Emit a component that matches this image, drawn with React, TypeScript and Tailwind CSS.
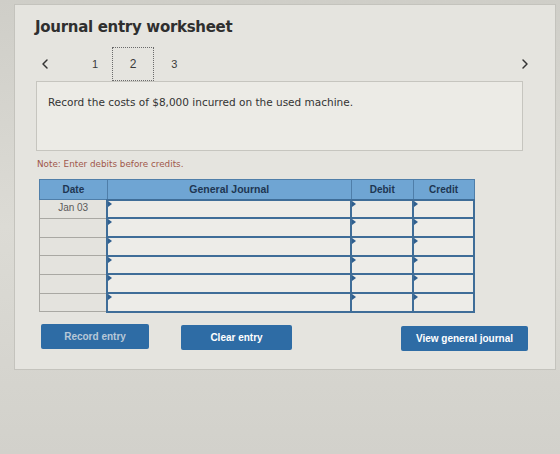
import { ChevronLeft, ChevronRight } from 'lucide-react'

const verdana = "font-['DejaVu_Sans',Verdana,sans-serif]"
const arial = "font-['Liberation_Sans',Arial,sans-serif]"

const rows = ['Jan 03', '', '', '', '', '']

function InputCell({ width }: { width: string }) {
  return (
    <td className={`relative h-[18.7px] border-2 border-[#3f6d98] bg-[#edece8] p-0 ${width}`}>
      <span className="absolute left-0 top-0 h-0 w-0 border-y-[3px] border-l-[4px] border-y-transparent border-l-[#2f5f8f]" />
    </td>
  )
}

function JournalTable() {
  return (
    <table className={`ml-[24px] mt-[8px] w-[436px] border-collapse ${arial} text-[10px]`}>
      <thead>
        <tr className="h-[20px] bg-[#6fa5d3] font-bold text-[#1e3652]">
          <th className="w-[68px] border border-[#4f7ea9]">Date</th>
          <th className="w-[245px] border border-[#4f7ea9] text-[10.5px]">General Journal</th>
          <th className="w-[62px] border border-[#4f7ea9]">Debit</th>
          <th className="w-[61px] border border-[#4f7ea9]">Credit</th>
        </tr>
      </thead>
      <tbody>
        {rows.map((date, i) => (
          <tr key={i}>
            <td className="h-[18.7px] border border-[#a9a8a3] bg-[#e4e3de] p-0 text-center align-top pt-[2px] leading-[12px] text-[#5a5a5a]">
              {date}
            </td>
            <InputCell width="w-[245px]" />
            <InputCell width="w-[62px]" />
            <InputCell width="w-[61px]" />
          </tr>
        ))}
      </tbody>
    </table>
  )
}

export default function App() {
  return (
    <div className="h-[454px] w-[560px] overflow-hidden bg-gradient-to-b from-[#cfcec8] via-[#dcdbd5] to-[#d2d1cb] pl-[14px] pr-[4px] pt-[4px]">
      <div className="h-[366px] border border-[#c4c3bd] bg-[#e5e4df]">
        <h1 className={`pl-[20px] pt-[13px] text-[15px] font-bold leading-[18px] tracking-[-0.3px] text-[#2f2f2f] ${verdana}`}>
          Journal entry worksheet
        </h1>

        <div className={`mt-[11px] flex h-[34px] items-center text-[11px] text-[#3a3a3a] ${arial}`}>
          <ChevronLeft className="ml-[22px] h-[16px] w-[16px] text-[#333]" strokeWidth={2.2} />
          <span className="ml-[39px]">1</span>
          <div className="ml-[14px] flex h-[34px] w-[42px] items-center justify-center border border-dotted border-[#6a6a6a] text-[12px]">
            2
          </div>
          <span className="ml-[17px]">3</span>
          <ChevronRight className="ml-auto mr-[22px] h-[16px] w-[16px] text-[#333]" strokeWidth={2.2} />
        </div>

        <div className={`ml-[21px] h-[70px] w-[487px] border border-[#c6c5bf] bg-[#ecebe6] pl-[11px] pt-[13px] text-[10.5px] text-[#333] ${verdana}`}>
          Record the costs of $8,000 incurred on the used machine.
        </div>

        <p className={`ml-[22px] mt-[7px] text-[8.8px] text-[#a0574a] ${verdana}`}>
          Note: Enter debits before credits.
        </p>

        <JournalTable />

        <div className={`mt-[11px] flex items-start text-[10px] font-bold ${arial}`}>
          <button className="ml-[26px] h-[25px] w-[108px] rounded-[2px] bg-[#2e6ca5] text-[#b8c8d8]">
            Record entry
          </button>
          <button className="ml-[32px] mt-[1px] h-[25px] w-[111px] rounded-[2px] bg-[#2e6ca5] text-white">
            Clear entry
          </button>
          <button className="ml-auto mr-[27px] mt-[2px] h-[25px] w-[127px] rounded-[2px] bg-[#2e6ca5] text-white">
            View general journal
          </button>
        </div>
      </div>
    </div>
  )
}
